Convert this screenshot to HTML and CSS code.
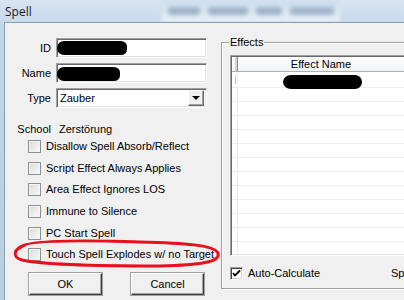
FILE: index.html
```html
<!DOCTYPE html>
<html lang="de">
  <head>
    <meta charset="UTF-8" />
    <title>Spell</title>
    <link rel="stylesheet" href="styles.css">
  </head>
  <body>
    <div class="titlebar">
      <span class="title">Spell</span>
      <div class="title-tabs">
        <span class="tab tab-a"></span>
        <span class="tab tab-b"></span>
        <span class="tab tab-c"></span>
        <span class="tab tab-d"></span>
      </div>
    </div>

    <div class="frame">
      <div class="frame-edge"></div>
      <div class="client">
        <div class="left-pane">
          <div class="fields">
            <label class="lbl">ID</label>
            <div class="textbox"><span class="redact redact-id"></span></div>

            <label class="lbl">Name</label>
            <div class="textbox"><span class="redact redact-name"></span></div>

            <label class="lbl">Type</label>
            <div class="combo">
              <span class="combo-value">Zauber</span>
              <span class="combo-btn"><span class="arrow"></span></span>
            </div>

            <span class="lbl school">School</span>
            <span class="school-value">Zerstörung</span>
          </div>

          <ul class="flags">
            <li><span class="themed-check"></span>Disallow Spell Absorb/Reflect</li>
            <li><span class="themed-check"></span>Script Effect Always Applies</li>
            <li><span class="themed-check"></span>Area Effect Ignores LOS</li>
            <li><span class="themed-check"></span>Immune to Silence</li>
            <li><span class="themed-check"></span>PC Start Spell</li>
            <li><span class="themed-check"></span>Touch Spell Explodes w/ no Target</li>
          </ul>

          <div class="buttons">
            <button class="btn">OK</button>
            <button class="btn">Cancel</button>
          </div>
        </div>

        <fieldset class="group">
          <legend>Effects</legend>
          <div class="listview">
            <div class="lv-header">
              <div class="lv-hmark"></div>
              <div class="lv-hname">Effect Name</div>
            </div>
            <div class="lv-row lv-first">
              <span class="lv-mark"><span class="cursor"></span></span>
              <span class="lv-name"><span class="redact redact-effect"></span></span>
            </div>
            <div class="lv-row"><span class="lv-mark"></span><span class="lv-name"></span></div>
            <div class="lv-row"><span class="lv-mark"></span><span class="lv-name"></span></div>
            <div class="lv-row"><span class="lv-mark"></span><span class="lv-name"></span></div>
            <div class="lv-row"><span class="lv-mark"></span><span class="lv-name"></span></div>
            <div class="lv-row"><span class="lv-mark"></span><span class="lv-name"></span></div>
            <div class="lv-row"><span class="lv-mark"></span><span class="lv-name"></span></div>
            <div class="lv-row"><span class="lv-mark"></span><span class="lv-name"></span></div>
            <div class="lv-row"><span class="lv-mark"></span><span class="lv-name"></span></div>
            <div class="lv-row"><span class="lv-mark"></span><span class="lv-name"></span></div>
            <div class="lv-row"><span class="lv-mark"></span><span class="lv-name"></span></div>
            <div class="lv-row"><span class="lv-mark"></span><span class="lv-name"></span></div>
            <div class="lv-row"><span class="lv-mark"></span><span class="lv-name"></span></div>
          </div>
          <div class="auto-row">
            <span class="auto-check">
              <span class="classic-check">
                <svg width="9" height="9" viewBox="0 0 9 9"><path d="M1 4 L3 6.5 L8 1.5" fill="none" stroke="#000" stroke-width="1.8"/></svg>
              </span>
              Auto-Calculate
            </span>
            <span>Spell Cost</span>
          </div>
        </fieldset>
      </div>
    </div>

    <!-- hand-drawn marker around the last flag -->
    <svg class="ink" width="404" height="300" viewBox="0 0 404 300">
      <path d="M20 248 C22 240 80 240 140 242 C185 243 214 245 218 253 C221 262 200 265 160 266 C100 266 40 264 22 260 C12 257 13 249 25 245"
            fill="none" stroke="#e8101c" stroke-width="3" stroke-linecap="round"/>
    </svg>
  </body>
</html>
```

FILE: styles.css
```css
html,
body {
  margin: 0;
}
body {
  width: 404px;
  height: 300px;
  overflow: hidden;
  position: relative;
  font-family: "Liberation Sans", Arial, sans-serif;
  font-size: 11px;
  color: #000;
  background-color: #f0f0f0;
}
.titlebar {
  height: 22px;
  display: flex;
  align-items: center;
  background: linear-gradient(#d9e5f2, #c7d9ec);
  overflow: hidden;
}
.title {
  font-family: "Open Sans", sans-serif;
  font-size: 12px;
  padding-left: 5px;
  color: #1b1b1b;
}
.title-tabs {
  display: flex;
  align-items: center;
  gap: 8px;
  margin-left: 130px;
  height: 22px;
  padding: 0 6px;
  background: linear-gradient(#cbdcee, #e9f0f7);
  filter: blur(2px);
}
.tab {
  height: 8px;
  background-color: #9fb3c8;
  border-radius: 3px;
}
.tab-a { width: 32px; }
.tab-b { width: 40px; }
.tab-c { width: 26px; }
.tab-d { width: 44px; }

.frame {
  display: flex;
  height: 278px;
}
.frame-edge {
  width: 4px;
  background: linear-gradient(#c3d5ea, #b9cde3);
}
.client {
  flex: 1;
  display: flex;
  border-top: 1px solid #8d9db0;
  border-left: 1px solid #8d9db0;
  overflow: hidden;
}

/* left side */
.left-pane {
  width: 216px;
  flex-shrink: 0;
  padding-top: 15px;
}
.fields {
  display: grid;
  grid-template-columns: 46px 151px;
  grid-auto-rows: 20px;
  column-gap: 5px;
  row-gap: 5px;
}
.lbl {
  text-align: right;
  align-self: center;
  line-height: 13px;
}
.textbox {
  box-sizing: border-box;
  height: 20px;
  background: #fff;
  border: 1px solid;
  border-color: #a0a0a0 #fff #fff #a0a0a0;
  box-shadow: inset 1px 1px 0 #696969, inset -1px -1px 0 #e3e3e3;
  display: flex;
  align-items: center;
}
.redact {
  display: inline-block;
  background-color: #000;
}
.redact-id {
  width: 70px;
  height: 14px;
  margin-left: 0;
  border-radius: 8px 7px 7px 8px / 8px 6px 6px 8px;
}
.redact-name {
  width: 63px;
  height: 14px;
  margin-left: 0;
  margin-top: 2px;
  border-radius: 8px 7px 7px 8px / 8px 6px 6px 8px;
}
.combo {
  box-sizing: border-box;
  height: 20px;
  background: #fff;
  border: 1px solid;
  border-color: #a0a0a0 #fff #fff #a0a0a0;
  box-shadow: inset 1px 1px 0 #696969, inset -1px -1px 0 #e3e3e3;
  display: flex;
  align-items: center;
  padding: 0 2px 0 3px;
}
.combo-value {
  flex: 1;
}
.combo-btn {
  box-sizing: border-box;
  width: 16px;
  height: 16px;
  background-color: #f0f0f0;
  border: 1px solid;
  border-color: #fff #696969 #696969 #fff;
  box-shadow: inset -1px -1px 0 #a0a0a0;
  display: flex;
  align-items: center;
  justify-content: center;
}
.arrow {
  width: 0;
  height: 0;
  border-left: 4px solid transparent;
  border-right: 4px solid transparent;
  border-top: 4px solid #000;
}
.school {
  margin-top: 10px;
  align-self: start;
}
.school-value {
  margin-top: 10px;
  padding-left: 3px;
  line-height: 13px;
}
.flags {
  list-style: none;
  margin: 3px 0 0;
  padding: 0 0 0 23px;
}
.flags li {
  height: 21.6px;
  display: flex;
  align-items: center;
  gap: 5px;
  line-height: 13px;
  white-space: nowrap;
}
.themed-check {
  box-sizing: border-box;
  width: 13px;
  height: 13px;
  border: 1px solid #8e8f8f;
  background: linear-gradient(135deg, #d8d8d8, #fbfbfb);
  box-shadow: inset 0 0 0 1px #f4f4f4;
}
.buttons {
  display: flex;
  gap: 29px;
  padding-left: 24px;
  margin-top: 7px;
}
.btn {
  box-sizing: border-box;
  width: 73px;
  height: 22px;
  font-family: inherit;
  font-size: 11px;
  color: #000;
  background-color: #f0f0f0;
  border: 1px solid;
  border-color: #fff #404040 #404040 #fff;
  box-shadow: inset -1px -1px 0 #a0a0a0, 0 0 0 1px #a0a0a0;
  padding: 0;
}

/* right side */
.group {
  flex-shrink: 0;
  width: 240px;
  margin: 13px 0 0 0;
  padding: 0 0 8px 7px;
  align-self: flex-start;
  border: 1px solid #a0a0a0;
  box-shadow: inset 1px 1px 0 #fff, 1px 1px 0 #fff;
}
.group legend {
  padding: 0 1px;
  line-height: 13px;
}
.listview {
  box-sizing: border-box;
  height: 201px;
  margin: 6px 0 0 1px;
  background-color: #fff;
  border: 1px solid;
  border-color: #a0a0a0 #fff #fff #a0a0a0;
  box-shadow: inset 1px 1px 0 #696969, inset -1px -1px 0 #e3e3e3;
  padding: 1px 0 0 1px;
  overflow: hidden;
}
.lv-header {
  box-sizing: border-box;
  display: flex;
  height: 15px;
  background: linear-gradient(#fdfdfd, #f1f2f4);
  border-bottom: 1px solid #b0b0b0;
}
.lv-hmark {
  box-sizing: border-box;
  width: 6px;
  border-left: 1px solid #fff;
  border-right: 1px solid #8a8a8a;
  box-shadow: inset -2px 0 0 #d5d5d5;
}
.lv-hname {
  width: 166px;
  text-align: center;
  line-height: 14px;
}
.lv-row {
  box-sizing: border-box;
  display: flex;
  height: 14px;
  border-bottom: 1px solid #ededed;
}
.lv-first {
  height: 16px;
}
.lv-mark {
  box-sizing: border-box;
  width: 6px;
  border-right: 1px solid #ededed;
  display: flex;
  align-items: center;
  justify-content: flex-end;
  padding-right: 1px;
}
.cursor {
  width: 1px;
  height: 8px;
  background-color: #f2b24c;
}
.lv-name {
  width: 166px;
  position: relative;
}
.redact-effect {
  width: 79px;
  height: 14px;
  margin: 3px 0 0 45px;
  border-radius: 8px 7px 7px 8px / 7px 7px 7px 7px;
}
.auto-row {
  display: flex;
  align-items: center;
  margin-top: 11px;
  line-height: 13px;
  white-space: nowrap;
}
.auto-check {
  width: 162px;
  display: flex;
  align-items: center;
  gap: 5px;
}
.classic-check {
  box-sizing: border-box;
  width: 13px;
  height: 13px;
  margin-left: 1px;
  background-color: #fff;
  border: 1px solid;
  border-color: #a0a0a0 #fff #fff #a0a0a0;
  box-shadow: inset 1px 1px 0 #404040, inset -1px -1px 0 #d4d0c8;
  display: flex;
  align-items: center;
  justify-content: center;
}
.ink {
  position: absolute;
  top: 0;
  left: 0;
  pointer-events: none;
}
```
